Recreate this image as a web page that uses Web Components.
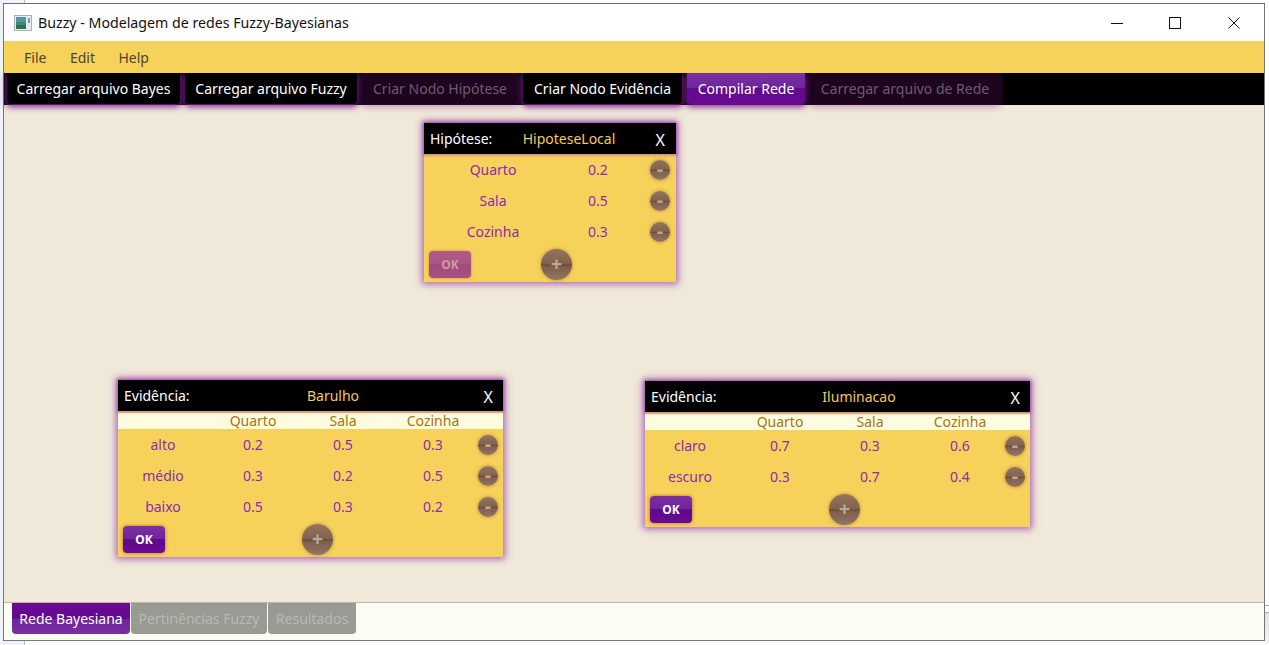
<!DOCTYPE html>
<html lang="pt">
<head>
<meta charset="utf-8">
<title>Buzzy</title>
<style>
    html, body { margin: 0; height: 100%; }
    body {
        background:
            linear-gradient(#a9aeb8, #a9aeb8) 1265px 605px / 4px 1px no-repeat,
            linear-gradient(#a9aeb8, #a9aeb8) 1265px 612px / 4px 1px no-repeat,
            linear-gradient(#e4e4e6, #f4f4f5) 1265px 613px / 4px 32px no-repeat,
            linear-gradient(to right, #eff3f9 24px, #b4bac3 24px, #b4bac3 25px, #fff 25px);
        font-family: "Noto Sans", "Open Sans", sans-serif;
        font-size: 14px;
        overflow: hidden;
    }
</style>
</head>
<body>
<app-window>
    <title-bar slot="title">Buzzy - Modelagem de redes Fuzzy-Bayesianas</title-bar>
    <menu-bar slot="menu">
        <span>File</span><span>Edit</span><span>Help</span>
    </menu-bar>
    <tool-bar slot="tools">
        <tool-button style="width:173px">Carregar arquivo Bayes</tool-button>
        <tool-button style="width:172px">Carregar arquivo Fuzzy</tool-button>
        <tool-button style="width:156px" disabled>Criar Nodo Hipótese</tool-button>
        <tool-button style="width:159px">Criar Nodo Evidência</tool-button>
        <tool-button style="width:118px" active>Compilar Rede</tool-button>
        <tool-button style="width:190px" disabled>Carregar arquivo de Rede</tool-button>
    </tool-bar>
    <net-canvas slot="canvas">
        <bayes-node style="left:420px;top:18px;width:252px;--close-right:11px;--minus-right:6px" label="Hipótese:" name="HipoteseLocal" name-center="145" cols="138px 72px 1fr" plus-gap="70" ok-disabled>
            <node-row cells="Quarto|0.2"></node-row>
            <node-row cells="Sala|0.5"></node-row>
            <node-row cells="Cozinha|0.3"></node-row>
        </bayes-node>
        <bayes-node style="left:114px;top:275px;width:385px" label="Evidência:" name="Barulho" name-center="215" cols="90px 90px 90px 90px 1fr" plus-gap="137" head="Quarto|Sala|Cozinha">
            <node-row cells="alto|0.2|0.5|0.3"></node-row>
            <node-row cells="médio|0.3|0.2|0.5"></node-row>
            <node-row cells="baixo|0.5|0.3|0.2"></node-row>
        </bayes-node>
        <bayes-node style="left:641px;top:276px;width:385px" label="Evidência:" name="Iluminacao" name-center="214" cols="90px 90px 90px 90px 1fr" plus-gap="137" head="Quarto|Sala|Cozinha">
            <node-row cells="claro|0.7|0.3|0.6"></node-row>
            <node-row cells="escuro|0.3|0.7|0.4"></node-row>
        </bayes-node>
    </net-canvas>
    <tab-bar slot="tabs">
        <tab-button style="width:118px" active>Rede Bayesiana</tab-button>
        <tab-button style="width:136px">Pertinências Fuzzy</tab-button>
        <tab-button style="width:88px">Resultados</tab-button>
    </tab-bar>
</app-window>

<script>
class AppWindow extends HTMLElement {
    constructor() {
        super();
        this.attachShadow({ mode: 'open' });
        this.shadowRoot.innerHTML = `
            <style>
                :host {
                    display: flex;
                    flex-direction: column;
                    width: 1260px;
                    height: 636px;
                    margin: 3px 0 0 3px;
                    border: 1px solid #777;
                    border-top-color: #6e6e6e;
                    background: #fff;
                }
            </style>
            <slot name="title"></slot>
            <slot name="menu"></slot>
            <slot name="tools"></slot>
            <slot name="canvas"></slot>
            <slot name="tabs"></slot>
        `;
    }
}

class TitleBar extends HTMLElement {
    constructor() {
        super();
        this.attachShadow({ mode: 'open' });
        this.shadowRoot.innerHTML = `
            <style>
                :host {
                    display: flex;
                    align-items: center;
                    height: 37px;
                    padding-right: 1px;
                    background: #fff;
                    color: #111;
                    font-size: 14.2px;
                }
                .icon { margin: 0 6px 0 10px; display: block; }
                .text { flex: 1; padding-bottom: 1px; }
                .ctl { width: 58.5px; height: 37px; display: flex; align-items: center; justify-content: center; }
                svg { display: block; }
            </style>
            <svg class="icon" width="18" height="16" viewBox="0 0 18 16">
                <rect x="0.5" y="0.5" width="17" height="15" fill="#e8ecef" stroke="#a9b0b6"/>
                <rect x="2" y="2" width="10" height="12" fill="#3d8a80"/>
                <rect x="2" y="2" width="10" height="5" fill="#4e9aa0"/>
                <rect x="2" y="10" width="10" height="4" fill="#2f6f55"/>
                <rect x="14" y="3" width="2" height="5" fill="#7f9aa5"/>
            </svg>
            <span class="text"><slot></slot></span>
            <span class="ctl"><svg width="12" height="12" viewBox="0 0 12 12"><path d="M0 6.5H12" stroke="#111" fill="none"/></svg></span>
            <span class="ctl"><svg width="12" height="12" viewBox="0 0 12 12"><rect x="0.5" y="0.5" width="11" height="11" stroke="#111" fill="none"/></svg></span>
            <span class="ctl"><svg width="12" height="12" viewBox="0 0 12 12"><path d="M0.5 0.5L11.5 11.5M11.5 0.5L0.5 11.5" stroke="#111" fill="none"/></svg></span>
        `;
    }
}

class MenuBar extends HTMLElement {
    constructor() {
        super();
        this.attachShadow({ mode: 'open' });
        this.shadowRoot.innerHTML = `
            <style>
                :host {
                    display: flex;
                    align-items: center;
                    gap: 23.5px;
                    height: 32px;
                    padding-left: 20px;
                    background: #f7d25a;
                    color: #4b4630;
                    font-size: 14px;
                    position: relative;
                    z-index: 3;
                }
            </style>
            <slot></slot>
        `;
    }
}

class ToolBar extends HTMLElement {
    constructor() {
        super();
        this.attachShadow({ mode: 'open' });
        this.shadowRoot.innerHTML = `
            <style>
                :host {
                    display: flex;
                    gap: 5px;
                    height: 32px;
                    padding-left: 3px;
                    background: #000;
                    position: relative;
                    z-index: 2;
                }
            </style>
            <slot></slot>
        `;
    }
}

class ToolButton extends HTMLElement {
    constructor() {
        super();
        this.attachShadow({ mode: 'open' });
        this.shadowRoot.innerHTML = `
            <style>
                :host {
                    display: flex;
                    align-items: center;
                    justify-content: center;
                    box-sizing: border-box;
                    height: 31px;
                    border-radius: 0 0 4px 4px;
                    background: #000;
                    color: #fff;
                    font-size: 14px;
                    white-space: nowrap;
                    box-shadow: 0 2px 6px 1px rgba(128, 30, 150, 0.95);
                }
                :host([disabled]) {
                    background: #1f0420;
                    color: #6d5d6d;
                    box-shadow: 0 2px 6px 1px rgba(128, 30, 150, 0.4);
                }
                :host([active]) {
                    background: linear-gradient(#7a2fa3 0, #6f259b 50%, #5f0a8c 50%, #6c0a95 100%);
                }
            </style>
            <slot></slot>
        `;
    }
}

class NetCanvas extends HTMLElement {
    constructor() {
        super();
        this.attachShadow({ mode: 'open' });
        this.shadowRoot.innerHTML = `
            <style>
                :host {
                    display: block;
                    position: relative;
                    height: 497px;
                    background: #f0e8d9;
                    border-bottom: 1px solid #bdb8ac;
                }
            </style>
            <slot></slot>
        `;
    }
}

class BayesNode extends HTMLElement {
    constructor() {
        super();
        this.attachShadow({ mode: 'open' });
    }

    connectedCallback() {
        const head = this.getAttribute('head');
        const cols = this.getAttribute('cols');
        this.style.setProperty('--cols', cols);
        this.shadowRoot.innerHTML = `
            <style>
                :host {
                    display: block;
                    position: absolute;
                    background: #f7d25a;
                    font-size: 14px;
                    box-shadow: 0 0 7px 2px rgba(140, 40, 165, 0.7);
                }
                .top {
                    position: relative;
                    z-index: 1;
                    display: flex;
                    align-items: center;
                    height: 31px;
                    padding-left: 6px;
                    background: #000;
                    color: #fff;
                    box-shadow: 0 0 3px 1px rgba(150, 50, 170, 0.6);
                }
                .name {
                    position: absolute;
                    left: ${this.getAttribute('name-center')}px;
                    transform: translateX(-50%);
                    color: #f5c95a;
                }
                .close {
                    position: absolute;
                    right: var(--close-right, 10px);
                    top: 7px;
                    font-size: 16px;
                    line-height: 20px;
                }
                .band {
                    display: grid;
                    grid-template-columns: ${cols};
                    align-items: center;
                    height: 16px;
                    margin-top: 2px;
                    background: #fefcde;
                    color: #a4750f;
                    text-align: center;
                    line-height: 16px;
                }
                .rows { display: flex; flex-direction: column; }
                .foot {
                    display: flex;
                    align-items: center;
                    height: 33px;
                    padding: 1px 0 1px 5px;
                }
            </style>
            <div class="top">
                <span>${this.getAttribute('label')}</span>
                <span class="name">${this.getAttribute('name')}</span>
                <span class="close">X</span>
            </div>
            ${head ? `<div class="band"><span></span>${head.split('|').map(h => `<span>${h}</span>`).join('')}</div>` : ''}
            <div class="rows"><slot></slot></div>
            <div class="foot">
                <ok-button ${this.hasAttribute('ok-disabled') ? 'disabled' : ''}>OK</ok-button>
                <round-button size="31" style="margin-left:${this.getAttribute('plus-gap')}px">+</round-button>
            </div>
        `;
    }
}

class NodeRow extends HTMLElement {
    constructor() {
        super();
        this.attachShadow({ mode: 'open' });
    }

    connectedCallback() {
        const cells = this.getAttribute('cells').split('|');
        this.shadowRoot.innerHTML = `
            <style>
                :host {
                    display: grid;
                    grid-template-columns: var(--cols);
                    align-items: center;
                    height: 31px;
                    color: #8b2cb0;
                    text-align: center;
                }
                round-button { justify-self: end; margin-right: var(--minus-right, 5px); }
            </style>
            ${cells.map(c => `<span>${c}</span>`).join('')}
            <round-button size="20">-</round-button>
        `;
    }
}

class RoundButton extends HTMLElement {
    constructor() {
        super();
        this.attachShadow({ mode: 'open' });
    }

    connectedCallback() {
        const size = Number(this.getAttribute('size'));
        this.shadowRoot.innerHTML = `
            <style>
                :host {
                    display: flex;
                    align-items: center;
                    justify-content: center;
                    width: ${size}px;
                    height: ${size}px;
                    border-radius: 50%;
                    background: linear-gradient(#937460 0, #83634c 46%, #6b4c37 52%, #7f604c 58%, #937566 100%);
                    box-shadow: 0 0 3px 1px rgba(150, 100, 60, 0.4);
                    color: #b8a895;
                    font-weight: 700;
                    font-size: ${size > 25 ? 20 : 20}px;
                    line-height: 1;
                    padding-bottom: 1px;
                    box-sizing: border-box;
                }
            </style>
            <slot></slot>
        `;
    }
}

class OkButton extends HTMLElement {
    constructor() {
        super();
        this.attachShadow({ mode: 'open' });
        this.shadowRoot.innerHTML = `
            <style>
                :host {
                    display: flex;
                    align-items: center;
                    justify-content: center;
                    width: 42px;
                    height: 27px;
                    border-radius: 4px;
                    background: linear-gradient(#7a2fa3 0, #6f259b 50%, #5f0a8c 50%, #6c0a95 100%);
                    box-shadow: 0 0 3px 1px rgba(180, 70, 60, 0.5);
                    color: #fff;
                    font-size: 12px;
                    font-weight: 700;
                }
                :host([disabled]) {
                    background: linear-gradient(#b25a86 0, #ab5583 50%, #a14a7c 50%, #a9527f 100%);
                    color: #cf9ba0;
                    box-shadow: 0 0 2px 1px rgba(180, 90, 100, 0.3);
                }
            </style>
            <slot></slot>
        `;
    }
}

class TabBar extends HTMLElement {
    constructor() {
        super();
        this.attachShadow({ mode: 'open' });
        this.shadowRoot.innerHTML = `
            <style>
                :host {
                    display: flex;
                    gap: 1px;
                    flex: 1;
                    padding-left: 8px;
                    background: #fdfcf3;
                }
            </style>
            <slot></slot>
        `;
    }
}

class TabButton extends HTMLElement {
    constructor() {
        super();
        this.attachShadow({ mode: 'open' });
        this.shadowRoot.innerHTML = `
            <style>
                :host {
                    display: flex;
                    align-items: center;
                    justify-content: center;
                    height: 31px;
                    border-radius: 0 0 4px 4px;
                    background: #9a9a94;
                    color: #b9b9b3;
                    font-size: 14px;
                    white-space: nowrap;
                }
                :host([active]) {
                    background: linear-gradient(#6c0a95 0, #5f0a8c 50%, #6f259b 50%, #7a2fa3 100%);
                    color: #fff;
                }
            </style>
            <slot></slot>
        `;
    }
}

customElements.define('app-window', AppWindow);
customElements.define('title-bar', TitleBar);
customElements.define('menu-bar', MenuBar);
customElements.define('tool-bar', ToolBar);
customElements.define('tool-button', ToolButton);
customElements.define('net-canvas', NetCanvas);
customElements.define('bayes-node', BayesNode);
customElements.define('node-row', NodeRow);
customElements.define('round-button', RoundButton);
customElements.define('ok-button', OkButton);
customElements.define('tab-bar', TabBar);
customElements.define('tab-button', TabButton);
</script>
</body>
</html>
